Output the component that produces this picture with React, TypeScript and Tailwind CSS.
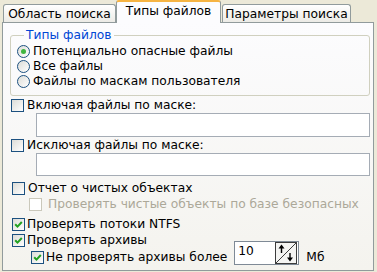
import React from 'react';

const Check: React.FC<{ checked?: boolean; disabled?: boolean; className?: string }> = ({
  checked,
  disabled,
  className = '',
}) => (
  <span
    className={`w-[13px] h-[13px] shrink-0 border flex items-center justify-center ${
      disabled
        ? 'border-[#cac8bb] bg-white'
        : 'border-[#1c5180] bg-linear-to-br from-[#dcdcd7] to-white'
    } ${className}`}
  >
    {checked && (
      <svg width="9" height="9" viewBox="0 0 9 9">
        <path d="M1.2 4.2 L3.5 6.6 L7.8 2" stroke="#21a121" strokeWidth="2" fill="none" />
      </svg>
    )}
  </span>
);

const Radio: React.FC<{ checked?: boolean }> = ({ checked }) => (
  <span className="w-[13px] h-[13px] shrink-0 rounded-full border border-[#1c5180] bg-linear-to-br from-[#dcdcd7] to-white flex items-center justify-center">
    {checked && <span className="w-[5px] h-[5px] rounded-full bg-[#3fb53f]" />}
  </span>
);

const SpinButton = () => (
  <svg width="22" height="22" viewBox="0 0 22 22" className="shrink-0">
    <rect x="0.5" y="0.5" width="21" height="21" fill="#f4f4f2" stroke="#3c3c3c" />
    <path d="M1 21 L21 1" stroke="#3c3c3c" strokeWidth="1" />
    {/* вверх */}
    <path d="M6.5 4 V11" stroke="#000" strokeWidth="1.4" />
    <path d="M3.5 6.5 L6.5 2.5 L9.5 6.5 Z" fill="#000" />
    {/* вниз */}
    <path d="M15 11 V18" stroke="#000" strokeWidth="1.4" />
    <path d="M12 15.5 L15 19.5 L18 15.5 Z" fill="#000" />
  </svg>
);

export default function App() {
  return (
    <div className="w-[377px] h-[272px] bg-[#ece9d8] overflow-hidden flex flex-col text-[12.25px] leading-[15px] text-black font-['DejaVu_Sans',Verdana,sans-serif]">
      {/* вкладки */}
      <div className="h-[22px] flex items-end pl-[3px] relative z-10 shrink-0">
        <div className="w-[113px] h-[18px] border border-b-0 border-[#919b9c] rounded-t-[3px] bg-linear-to-b from-white to-[#ecebe6] flex items-center justify-center pt-[1px]">
          Область поиска
        </div>
        <div className="w-[105px] h-[23px] -mb-px border-x border-[#919b9c] border-t-2 border-t-[#f6b443] rounded-t-[3px] bg-[#fcfcfe] flex items-center justify-center pb-[3px]">
          Типы файлов
        </div>
        <div className="w-[129px] h-[18px] ml-[1px] border border-b-0 border-[#919b9c] rounded-t-[3px] bg-linear-to-b from-white to-[#ecebe6] flex items-center justify-center pt-[1px]">
          Параметры поиска
        </div>
      </div>

      {/* панель */}
      <div className="ml-[2px] w-[372px] h-[249px] border border-[#919b9c] bg-linear-to-b from-[#fcfcfe] to-[#f4f3ee] flex flex-col shrink-0">
        <fieldset className="mt-[5px] ml-[7px] w-[360px] border border-[#d0d0bf] rounded-[3px] pt-[2px] pb-[6px] pl-[6px]">
          <legend className="ml-[7px] px-[2px] text-[#0046d5] leading-[14px]">Типы файлов</legend>
          <div className="h-[15px] flex items-center gap-[3px]">
            <Radio checked />
            <span>Потенциально опасные файлы</span>
          </div>
          <div className="h-[15px] flex items-center gap-[3px]">
            <Radio />
            <span>Все файлы</span>
          </div>
          <div className="h-[15px] flex items-center gap-[3px]">
            <Radio />
            <span>Файлы по маскам пользователя</span>
          </div>
        </fieldset>

        <div className="mt-[1px] h-[16px] flex items-center gap-[3px] pl-[8px]">
          <Check />
          <span>Включая файлы по маске:</span>
        </div>
        <div className="ml-[33px] w-[334px] h-[24px] border border-[#a5acb5] bg-white" />

        <div className="h-[16px] flex items-center gap-[3px] pl-[8px]">
          <Check />
          <span>Исключая файлы по маске:</span>
        </div>
        <div className="ml-[33px] w-[334px] h-[23px] border border-[#a5acb5] bg-white" />

        <div className="mt-[4px] h-[17px] flex items-center gap-[3px] pl-[9px]">
          <Check />
          <span>Отчет о чистых объектах</span>
        </div>
        <div className="-mt-px h-[17px] flex items-center pl-[26px] text-[#aca899] whitespace-nowrap">
          <Check disabled />
          <span className="ml-[6px]">Проверять чистые объекты по базе безопасных</span>
        </div>
        <div className="mt-[3px] h-[17px] flex items-center gap-[2px] pl-[9px]">
          <Check checked />
          <span>Проверять потоки NTFS</span>
        </div>
        <div className="-mt-px h-[17px] flex items-center gap-[2px] pl-[9px]">
          <Check checked />
          <span>Проверять архивы</span>
        </div>
        <div className="h-[17px] flex items-center pl-[28px]">
          <Check checked />
          <span className="ml-[2px]">Не проверять архивы более</span>
          <div className="ml-[7px] self-start -mt-[8px] w-[65px] h-[24px] border border-[#7f8a96] bg-white flex items-center pr-[1px] shrink-0">
            <span className="flex-1 pl-[3px] -mt-[4px]">10</span>
            <SpinButton />
          </div>
          <span className="ml-[7px]">Мб</span>
        </div>
      </div>
    </div>
  );
}
